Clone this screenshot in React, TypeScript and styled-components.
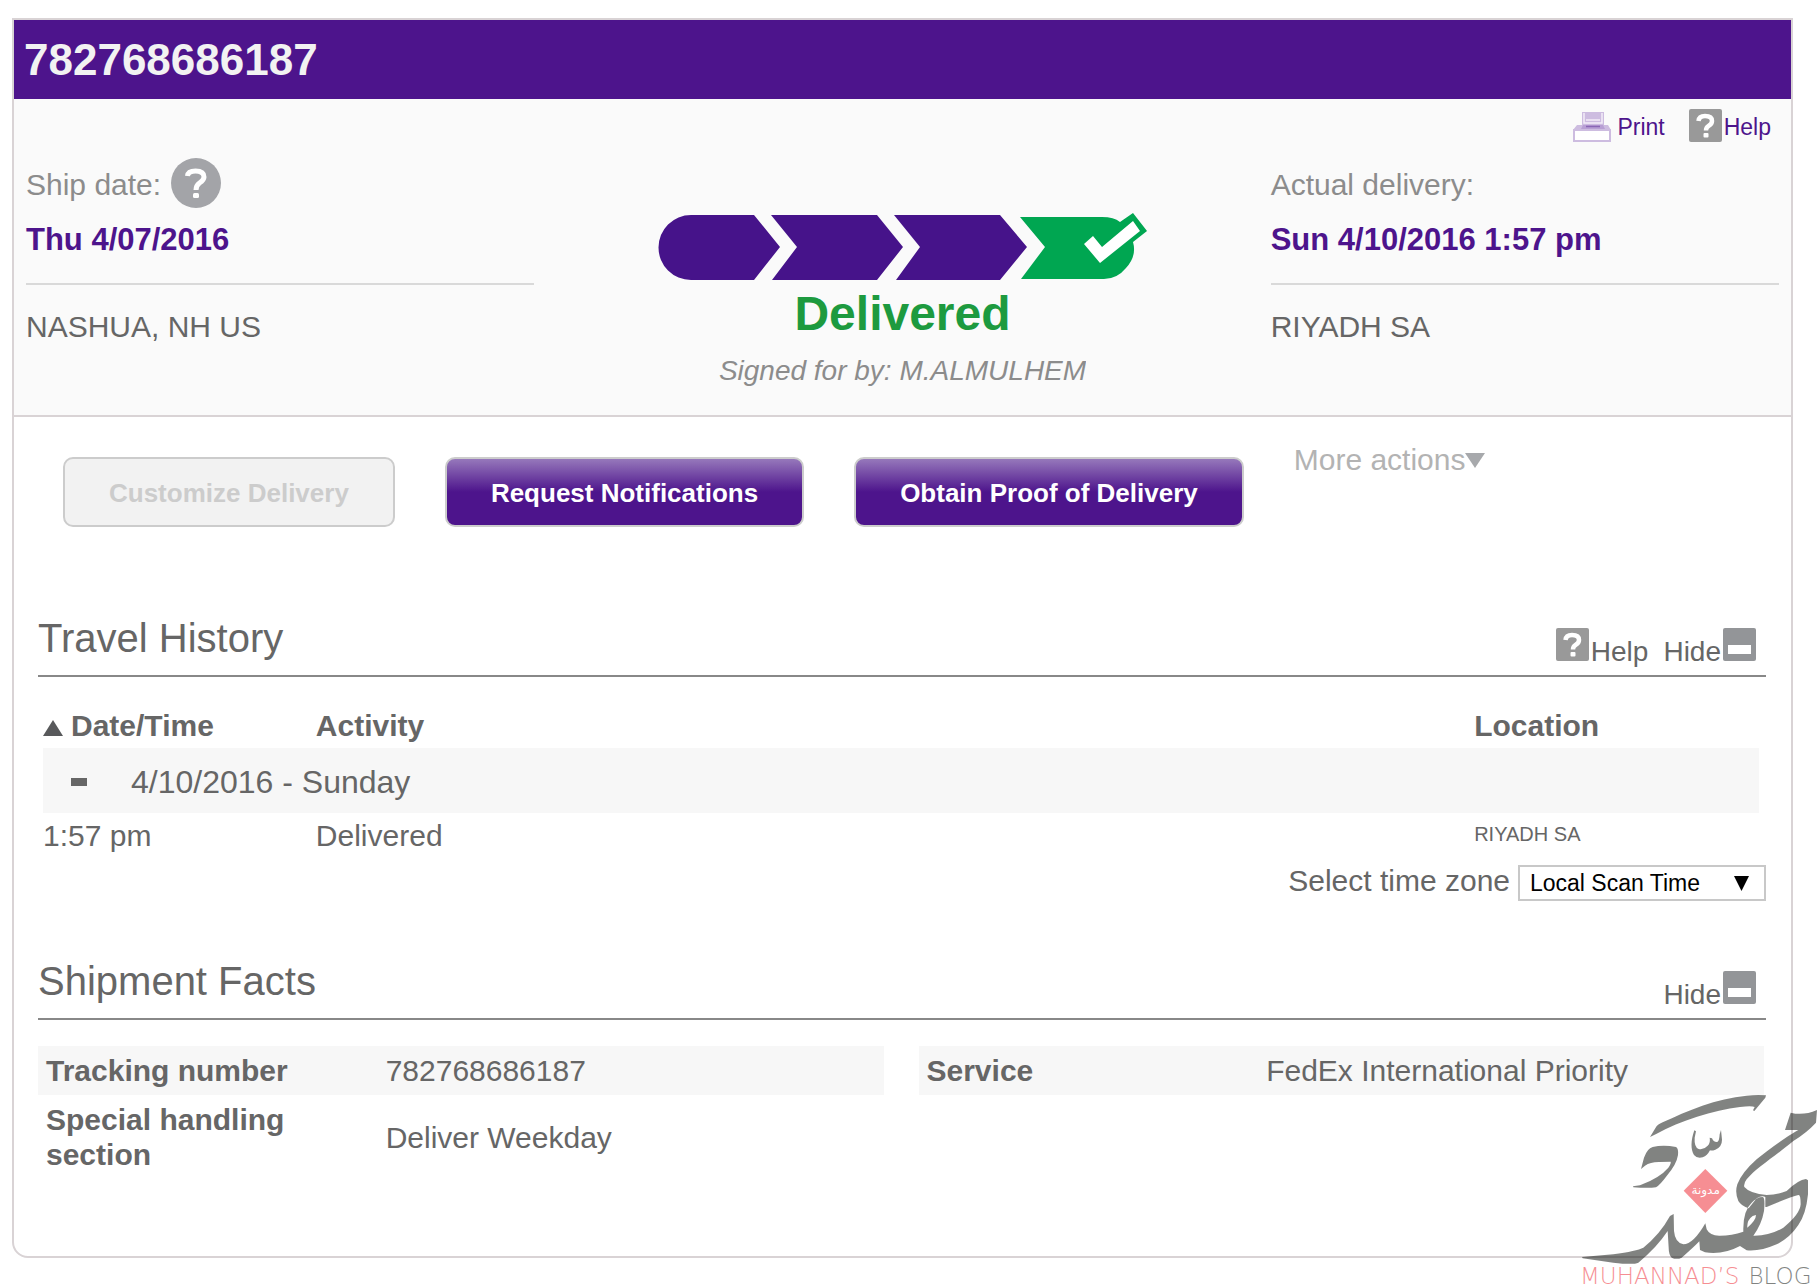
import React from "react";
import styled, { createGlobalStyle, css } from "styled-components";

const sans = '"Liberation Sans", Arial, sans-serif';
const purple = "#4d148c";
const line = "#d9d3d5";

const GlobalStyle = createGlobalStyle`
  *, *::before, *::after { box-sizing: border-box; }
  body { margin: 0; background: #fff; color: #666; font: 30px/36px ${sans}; }
  h1, h2, p, dl, dd { margin: 0; }
  svg { display: block; flex: none; }
`;

const Page = styled.main`
  position: relative;
  min-height: 100vh;
  padding: 18px 24px 30px 12px;
  overflow: hidden;
`;

const Panel = styled.article`
  border: 2px solid ${line};
  border-radius: 0 0 16px 16px;
  padding-bottom: 77px;
`;

const TitleBar = styled.h1`
  padding: 0 10px;
  background: ${purple};
  color: #f2f2f2;
  font-size: 44px;
  line-height: 79px;
`;

const Summary = styled.section`
  padding: 10px 12px 29px;
  background: #fafafa;
  border-bottom: 2px solid ${line};
`;

const Utilities = styled.nav`
  display: flex;
  justify-content: flex-end;
  gap: 24px;
  padding-right: 8px;
`;

const UtilityLink = styled.a<{ $gap: number }>`
  display: flex;
  gap: ${(p) => p.$gap}px;
  color: ${purple};
  font-size: 23px;
  line-height: 37px;
  text-decoration: none;
`;

const SummaryGrid = styled.div`
  display: grid;
  grid-template-columns: 29% 1fr 29%;
  padding-top: 12px;
`;

const StopLabel = styled.p`
  display: flex;
  gap: 10px;
  color: #8c8c8c;
  line-height: 54px;
`;

const StopDate = styled.p`
  padding-bottom: 15px;
  border-bottom: 2px solid #d9d9d9;
  color: ${purple};
  font-size: 31px;
  font-weight: bold;
  line-height: 56px;
`;

const StopPlace = styled.p`
  margin-top: 24px;
`;

const Status = styled.div`
  display: flex;
  flex-direction: column;
  align-items: center;
  padding-top: 55px;
`;

const StatusText = styled.p`
  color: #1d9a3f;
  font-size: 48px;
  font-weight: bold;
  line-height: 68px;
`;

const SignedBy = styled.p`
  height: 38px;
  overflow: hidden;
  color: #8c8c8c;
  font-size: 28px;
  font-style: italic;
  line-height: 46px;
`;

const Actions = styled.div`
  display: flex;
  align-items: flex-start;
  gap: 50px;
  padding: 25px 49px 0;
`;

const ButtonGroup = styled.div`
  display: flex;
  gap: 50px;
  padding-top: 15px;
`;

const ActionButton = styled.button`
  height: 70px;
  padding: 2px 44px 0;
  border: 2px solid #ccc;
  border-radius: 10px;
  background: linear-gradient(#9678bb 0%, ${purple} 50%);
  color: #fff;
  font: bold 26px/64px ${sans};
  white-space: nowrap;
  &:disabled {
    background: #f2f2f2;
    color: #ccc;
  }
`;

const plainButton = css`
  display: flex;
  padding: 0;
  border: 0;
  background: none;
  font-family: inherit;
`;

const MoreActions = styled.button`
  ${plainButton}
  align-items: center;
  color: #b3b3b3;
  font-size: 30px;
  line-height: 36px;
  white-space: nowrap;
`;

const Section = styled.section<{ $top: number }>`
  margin: ${(p) => p.$top}px 25px 0 24px;
`;

const SectionHead = styled.header`
  display: flex;
  justify-content: space-between;
  align-items: flex-end;
  border-bottom: 2px solid #888;
`;

const SectionTitle = styled.h2`
  padding-bottom: 9px;
  font-size: 40px;
  font-weight: normal;
  line-height: 56px;
`;

const Tools = styled.div`
  display: flex;
  gap: 15px;
  padding-right: 10px;
`;

const Tool = styled.button`
  ${plainButton}
  gap: 2px;
  color: #666;
  font-size: 28px;
  line-height: 47px;
`;

const History = styled.table`
  width: calc(100% - 12px);
  margin: 31px 7px 0 5px;
  border-collapse: collapse;
  table-layout: fixed;
  th, td { padding: 0; text-align: left; vertical-align: top; }
  thead th { padding-bottom: 4px; }
`;

const SortLabel = styled.span`
  display: flex;
  gap: 8px;
`;

const DayRow = styled.tr`
  background: #f7f7f7;
  font-size: 32px;
  line-height: 62px;
  td { padding-top: 3px; }
`;

const Day = styled.div`
  display: flex;
  align-items: center;
  gap: 44px;
  padding-left: 28px;
`;

const Dash = styled.span`
  width: 16px;
  height: 8px;
  background: #666;
`;

const ScanRow = styled.tr`
  line-height: 46px;
`;

const SmallCell = styled.td`
  font-size: 20px;
  line-height: 42px;
`;

const Zone = styled.div`
  display: flex;
  justify-content: flex-end;
  gap: 8px;
  margin-top: 6px;
  line-height: 32px;
`;

const SelectBox = styled.div`
  display: grid;
  align-items: center;
  > * { grid-area: 1 / 1; }
  > svg { justify-self: end; margin-right: 17px; pointer-events: none; }
`;

const Select = styled.select`
  width: 248px;
  height: 36px;
  padding: 0 10px;
  border: 2px solid #c8c8c8;
  border-radius: 0;
  background: #fff;
  color: #000;
  font: 23px ${sans};
  appearance: none;
`;

const Facts = styled.div`
  display: grid;
  grid-template-columns: 1fr 1fr;
  align-items: start;
  gap: 35px;
  padding: 26px 2px 0 0;
`;

const FactTable = styled.table`
  width: 100%;
  border-collapse: collapse;
  table-layout: fixed;
  line-height: 35px;
  tr:first-child { background: #f7f7f7; }
  th { width: 41%; padding: 7px 60px 7px 8px; text-align: left; }
  td { padding: 7px 1px; }
`;

const Watermark = styled.div`
  position: absolute;
  right: 0;
  bottom: 0;
  width: 237px;
  opacity: 0.5;
  pointer-events: none;
`;

const WatermarkText = styled.p`
  display: flex;
  gap: 9px;
  color: #ef2029;
  font: 200 23px/24px "DejaVu Sans Light", "DejaVu Sans", sans-serif;
  white-space: nowrap;
  span { color: #060a06; }
`;

const HelpSquare = () => (
  <svg width="33" height="33" viewBox="0 0 33 33" aria-hidden="true">
    <rect width="33" height="33" rx="2" fill="#999" />
    <path d="M9.500 12Q10 7 16 7Q23 7 23 12Q23 15 19.500 17Q17 18.500 17 21.500" fill="none" stroke="#fff" strokeWidth="4.500" />
    <rect x="14.500" y="24" width="5" height="4.500" rx="1" fill="#fff" />
  </svg>
);

const HelpCircle = () => (
  <svg width="50" height="50" viewBox="0 0 50 50" aria-hidden="true">
    <circle cx="25" cy="25" r="25" fill="#a3a4a8" />
    <path d="M16.500 18Q17 13 24.500 13Q33 13 33 19Q33 22 28.500 25Q25 27.500 25 32" fill="none" stroke="#fff" strokeWidth="5" />
    <rect x="22" y="35" width="6" height="5" rx="1.500" fill="#fff" />
  </svg>
);

const Printer = () => (
  <svg width="38" height="33" viewBox="0 0 38 33" aria-hidden="true">
    <path d="M9 3H31V16H35L38 21H0L4 16H9z" fill="#cdbce0" />
    <path d="M11 4V14H29V4" fill="none" stroke="#f3edf8" strokeWidth="1.500" />
    <path d="M13 11H27" stroke="#f3edf8" strokeWidth="1.500" />
    <path d="M10 16H30L32 20H8z" fill="#b89fd4" />
    <path d="M13 17.500H27" stroke="#8a66b5" strokeWidth="1.500" />
    <rect x="1" y="21" width="36" height="11" fill="#fff" stroke="#cdbce0" strokeWidth="2" />
  </svg>
);

const MinusSquare = () => (
  <svg width="33" height="33" viewBox="0 0 33 33" aria-hidden="true">
    <rect width="33" height="33" rx="2" fill="#939598" />
    <rect x="5" y="17" width="23" height="9" fill="#fff" />
  </svg>
);

const Progress = () => (
  <svg width="490" height="67" viewBox="0 0 490 67" role="img" aria-label="Shipment progress: delivered">
    <g fill="#46138a">
      <path d="M33 2H96L122 34L96 67H33A32.500 32.500 0 0 1 33 2z" />
      <path d="M113 2H219L245 34L219 67H114L139 34z" />
      <path d="M236 2H342L369 34L342 67H238L262 34z" />
    </g>
    <path d="M362 4H444Q456 4 462 9L475 0L489 18L475 29Q479 43 468 55Q459 66 446 66H363L387 34z" fill="#00a651" />
    <path d="M426 31L435 23L444 34L475 8L482 18L442 50z" fill="#fff" />
  </svg>
);

const Calligraphy = () => (
  <svg width="237" height="173" viewBox="60 90 711 519" aria-hidden="true">
    <g fill="#060a06">
      <path d="M270 228L285 203Q292 190 308 184C380 150 470 112 560 104Q590 101 618 103L616 110L583 150L579 148L584 138Q575 134 540 138C460 148 360 180 290 218z" />
      <path d="M403 208C392 240 392 265 402 282Q412 294 428 289Q442 284 450 268Q456 270 466 266Q486 258 486 236L483 207L479 220Q478 240 472 243Q460 244 456 232L449 230Q452 246 443 254Q430 268 416 264Q402 258 404 230L408 211z" />
      <path d="M243 324L252 290Q262 262 278 258Q310 250 348 258Q356 262 354 282Q350 310 320 345Q300 372 288 379Q265 382 220 379L219 376L240 373Q300 350 325 320Q334 306 332 302L300 303Q272 302 255 314z" />
      <path
        fillRule="evenodd"
        d="M675 207L692 155Q730 165 771 147L768 185Q740 215 700 240C640 290 590 320 560 355Q550 368 553 378Q570 398 620 402Q650 402 680 390Q715 356 738 354L744 358V400Q738 460 715 492Q690 530 650 550Q600 572 560 568L540 555Q490 582 435 574L420 567L418 541Q400 560 365 590Q350 597 335 590Q326 580 326 560L323 510Q290 560 235 605Q220 612 160 605L68 592L66 588L160 580Q230 570 250 560Q300 520 330 465L341 459L342 510Q345 545 370 550Q400 550 436 487L440 505Q450 525 480 524Q515 524 550 512Q548 450 575 425Q590 408 608 408Q616 410 612 450Q605 490 580 524Q630 525 670 500Q720 460 722 430Q722 400 715 402Q690 408 620 438L616 438V408Q606 402 590 412L566 442Q545 436 535 420Q524 395 532 370Q545 335 590 295C630 262 690 220 715 207zM562 500Q560 478 578 465L588 462Q588 478 562 500z"
      />
    </g>
    <path d="M436 324L502 389L436 456L371 389z" fill="#ef2029" />
    <text x="437" y="399" fill="#fff" fontFamily="DejaVu Sans, sans-serif" fontSize="36" textAnchor="middle">
      مدونة
    </text>
  </svg>
);

const Stop = ({ label, date, place, help }: { label: string; date: string; place: string; help?: boolean }) => (
  <div>
    <StopLabel>
      {label}
      {help && <HelpCircle />}
    </StopLabel>
    <StopDate>{date}</StopDate>
    <StopPlace>{place}</StopPlace>
  </div>
);

const HideTool = () => (
  <Tool type="button">
    Hide
    <MinusSquare />
  </Tool>
);

export default function App() {
  return (
    <Page>
      <GlobalStyle />
      <Panel>
        <TitleBar>782768686187</TitleBar>
        <Summary>
          <Utilities>
            <UtilityLink href="#print" $gap={6}>
              <Printer />
              Print
            </UtilityLink>
            <UtilityLink href="#help" $gap={2}>
              <HelpSquare />
              Help
            </UtilityLink>
          </Utilities>
          <SummaryGrid>
            <Stop label="Ship date:" date="Thu 4/07/2016" place="NASHUA, NH US" help />
            <Status>
              <Progress />
              <StatusText>Delivered</StatusText>
              <SignedBy>Signed for by: M.ALMULHEM</SignedBy>
            </Status>
            <Stop label="Actual delivery:" date="Sun 4/10/2016 1:57 pm" place="RIYADH SA" />
          </SummaryGrid>
        </Summary>

        <Actions>
          <ButtonGroup>
            <ActionButton type="button" disabled>
              Customize Delivery
            </ActionButton>
            <ActionButton type="button">Request Notifications</ActionButton>
            <ActionButton type="button">Obtain Proof of Delivery</ActionButton>
          </ButtonGroup>
          <MoreActions type="button">
            More actions
            <svg width="20" height="15" viewBox="0 0 20 15" aria-hidden="true">
              <path d="M0 0H20L10 15z" fill="#a7a9ac" />
            </svg>
          </MoreActions>
        </Actions>

        <Section $top={83}>
          <SectionHead>
            <SectionTitle>Travel History</SectionTitle>
            <Tools>
              <Tool type="button">
                <HelpSquare />
                Help
              </Tool>
              <HideTool />
            </Tools>
          </SectionHead>
          <History>
            <colgroup>
              <col style={{ width: "15.9%" }} />
              <col />
              <col style={{ width: "16.6%" }} />
            </colgroup>
            <thead>
              <tr>
                <th scope="col">
                  <SortLabel>
                    <svg width="20" height="28" viewBox="0 0 20 28" aria-hidden="true">
                      <path d="M0 28L10 12L20 28z" fill="#58595b" />
                    </svg>
                    Date/Time
                  </SortLabel>
                </th>
                <th scope="col">Activity</th>
                <th scope="col">Location</th>
              </tr>
            </thead>
            <tbody>
              <DayRow>
                <td colSpan={3}>
                  <Day>
                    <Dash />
                    4/10/2016 - Sunday
                  </Day>
                </td>
              </DayRow>
              <ScanRow>
                <td>1:57 pm</td>
                <td>Delivered</td>
                <SmallCell>RIYADH SA</SmallCell>
              </ScanRow>
            </tbody>
          </History>
          <Zone>
            <label htmlFor="zone">Select time zone</label>
            <SelectBox>
              <Select id="zone" defaultValue="local">
                <option value="local">Local Scan Time</option>
              </Select>
              <svg width="15" height="15" viewBox="0 0 15 15" aria-hidden="true">
                <path d="M0 0H15L7.500 15z" fill="#000" />
              </svg>
            </SelectBox>
          </Zone>
        </Section>

        <Section $top={52}>
          <SectionHead>
            <SectionTitle>Shipment Facts</SectionTitle>
            <Tools>
              <HideTool />
            </Tools>
          </SectionHead>
          <Facts>
            <FactTable>
              <tbody>
                <tr>
                  <th scope="row">Tracking number</th>
                  <td>782768686187</td>
                </tr>
                <tr>
                  <th scope="row">Special handling section</th>
                  <td>Deliver Weekday</td>
                </tr>
              </tbody>
            </FactTable>
            <FactTable>
              <tbody>
                <tr>
                  <th scope="row">Service</th>
                  <td>FedEx International Priority</td>
                </tr>
              </tbody>
            </FactTable>
          </Facts>
        </Section>
      </Panel>
      <Watermark>
        <Calligraphy />
        <WatermarkText>
          MUHANNAD’S <span>BLOG</span>
        </WatermarkText>
      </Watermark>
    </Page>
  );
}
